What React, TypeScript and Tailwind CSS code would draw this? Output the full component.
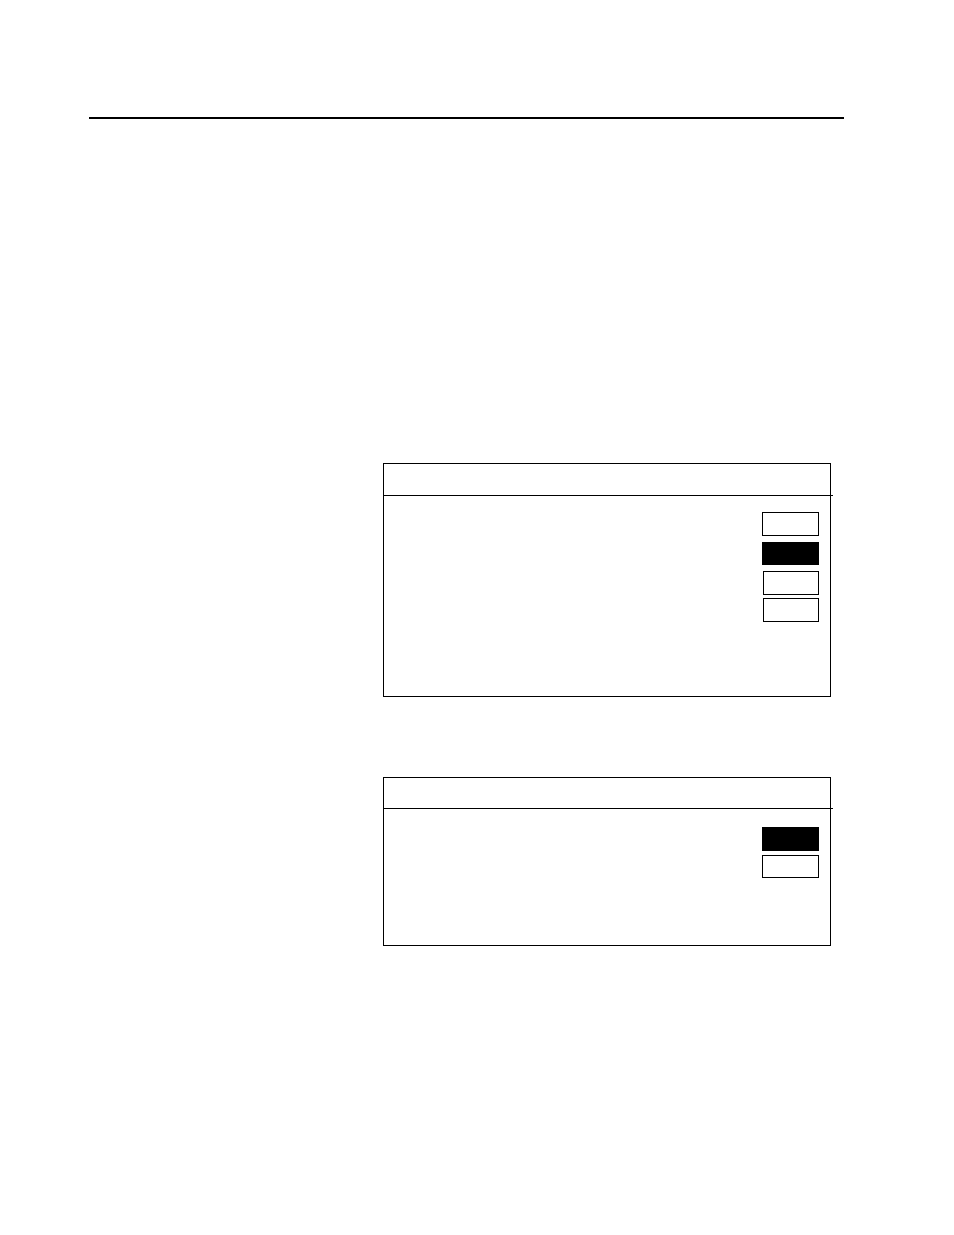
type Key = {
  id: string;
  label: string;
  selected?: boolean;
  size: string;
};

type PanelProps = {
  name: string;
  headerClass: string;
  bodyClass: string;
  groups: Key[][];
};

const optionGroups: Key[][] = [
  [
    { id: "a1", label: "Option 1", size: "w-[57px] h-[24px]" },
    { id: "a2", label: "Option 2", size: "w-[57px] h-[23px]", selected: true },
    { id: "a3", label: "Option 3", size: "w-[56px] h-[24px]" },
  ],
  [{ id: "a4", label: "Option 4", size: "w-[56px] h-[24px]" }],
];

const confirmGroups: Key[][] = [
  [{ id: "b1", label: "Option 1", size: "w-[57px] h-[24px]", selected: true }],
  [{ id: "b2", label: "Option 2", size: "w-[57px] h-[23px]" }],
];

function KeyBox({ item }: { item: Key }) {
  return (
    <button
      type="button"
      aria-label={item.label}
      aria-pressed={!!item.selected}
      className={`block border border-black ${item.size} ${
        item.selected ? "bg-black" : "bg-white"
      }`}
    />
  );
}

function Panel({ name, headerClass, bodyClass, groups }: PanelProps) {
  return (
    <section aria-label={name} className="border border-black">
      {/* the header rule runs slightly past the frame */}
      <div className={`-mr-[3px] border-b border-black ${headerClass}`} />
      <div className={`flex flex-col items-end pr-[11px] ${bodyClass}`}>
        {groups.map((group) => (
          <div key={group[0].id} className="flex flex-col items-end gap-1.5">
            {group.map((item) => (
              <KeyBox key={item.id} item={item} />
            ))}
          </div>
        ))}
      </div>
    </section>
  );
}

export default function App() {
  return (
    <main className="min-h-screen bg-white pt-[117px] font-['Liberation_Sans',sans-serif] text-black">
      <hr className="ml-[89px] mr-[110px] border-t-2 border-black" />

      <div className="ml-[383px] mr-[123px] mt-[344px] flex flex-col gap-20">
        <Panel
          name="Options"
          headerClass="h-[32px]"
          bodyClass="gap-[3px] pt-4 pb-[74px]"
          groups={optionGroups}
        />
        <Panel
          name="Confirmation"
          headerClass="h-[31px]"
          bodyClass="gap-1 pt-[18px] pb-[67px]"
          groups={confirmGroups}
        />
      </div>
    </main>
  );
}
